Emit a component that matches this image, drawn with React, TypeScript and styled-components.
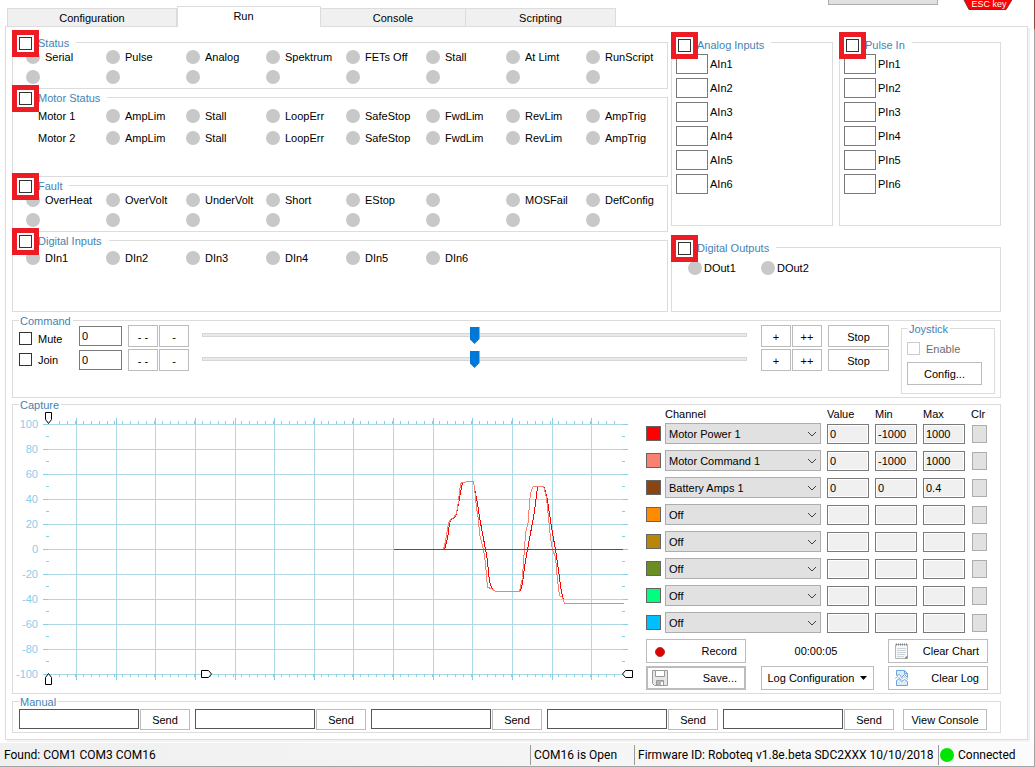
import React from 'react';
import styled, { createGlobalStyle, css } from 'styled-components';

const line = '#dcdcdc';
const buttonLine = '#bcbcbc';
const ink = '#000000';
const blue = '#4682b4';
const uiFont = "'Liberation Sans', Arial, sans-serif";

const GlobalStyle = createGlobalStyle`
  *, *::before, *::after { box-sizing: border-box; }
  body { margin: 0; background: #ffffff; color: ${ink}; font: 11px/14px ${uiFont}; }
  button, input, select { margin: 0; color: inherit; font: inherit; }
`;

/* ---------- window frame ---------- */

const Page = styled.div`
  min-height: 100vh;
  display: flex;
  flex-direction: column;
  border-style: solid;
  border-width: 0 1px 1px 0;
  border-image: linear-gradient(#8f4a3c 30px, #a4a4a4 30px) 1;
  overflow: hidden;
`;

const TopBar = styled.header`
  display: flex;
  height: 26px;
  padding-left: 7px;
  padding-right: 20px;
`;

const Tabs = styled.nav`
  flex: 0 1 609px;
  display: grid;
  grid-template-columns: 170fr 144fr 145fr 150fr;
  align-items: end;
`;

const Tab = styled.button<{ $active?: boolean }>`
  height: 18px;
  padding: 0;
  border: 1px solid ${line};
  border-bottom: 0;
  border-left-width: 0;
  background: #f0f0f0;
  &:first-child { border-left-width: 1px; }
  ${p =>
    p.$active &&
    css`
      height: 21px;
      margin-bottom: -1px;
      padding: 0 11px 3px 0;
      border-left-width: 1px;
      background: #ffffff;
      position: relative;
    `}
`;

const TopTools = styled.div`
  flex: 1;
  display: flex;
  justify-content: flex-end;
  align-items: flex-start;
  gap: 25px;
`;

const CutBox = styled.div`
  width: 110px;
  height: 5px;
  background: #e1e1e1;
  border: 1px solid #adadad;
  border-top: 0;
`;

const EscSign = styled.svg`
  display: block;
  width: 51px;
  height: 11px;
`;

const Panel = styled.main`
  margin: 0 6px 0 5px;
  padding: 15px 26px 6px 6px;
  border: 1px solid ${line};
  box-shadow: 2px 2px 0 #f3f3f3;
  display: flex;
  flex-direction: column;
`;

/* ---------- group boxes ---------- */

const Group = styled.fieldset`
  position: relative;
  min-width: 0;
  margin: 0;
  padding: 0;
  border: 1px solid ${line};
`;

const Caption = styled.legend<{ $marked?: boolean; $low?: boolean }>`
  position: absolute;
  z-index: 1;
  left: 6px;
  top: ${p => (p.$low ? -5 : -7)}px;
  height: 14px;
  padding: 0 2px 0 1px;
  background: #ffffff;
  color: ${blue};
  white-space: nowrap;
  ${p =>
    p.$marked &&
    css`
      left: 0;
      display: flex;
      align-items: center;
      padding: 0 7px 0 0;
    `}
`;

const Marker = styled.label`
  display: flex;
  align-items: center;
  justify-content: center;
  width: 27px;
  height: 27px;
  margin: 0 -1px 0 -1px;
  border: 5px solid #ed1c24;
  background: #ffffff;
  position: relative;
`;

const Check = styled.input.attrs({ type: 'checkbox' })`
  appearance: none;
  flex: none;
  width: 13px;
  height: 13px;
  border: 1px solid #333333;
  background: #ffffff;
  &:checked { background: #0078d7; }
  &:disabled { border-color: #cccccc; }
`;

type GroupBoxProps = { title: string; marked?: boolean; low?: boolean };

function GroupCaption({ title, marked, low }: GroupBoxProps) {
  return (
    <Caption $marked={marked} $low={low}>
      {marked && (
        <Marker>
          <Check aria-label={title} />
        </Marker>
      )}
      <span>{title}</span>
    </Caption>
  );
}

/* ---------- indicators ---------- */

const Upper = styled.div`
  display: grid;
  grid-template-columns: minmax(0, 656fr) minmax(0, 330fr);
  gap: 3px;
`;

const Stack = styled.div<{ $gap: number }>`
  display: flex;
  flex-direction: column;
  gap: ${p => p.$gap}px;
`;

const LedGroup = styled(Group)<{ $height: number; $top: number }>`
  min-height: ${p => p.$height}px;
  padding: ${p => p.$top}px 1px 0 13px;
`;

const LedRow = styled.div<{ $height: number }>`
  display: grid;
  grid-template-columns: repeat(8, minmax(0, 1fr));
  height: ${p => p.$height}px;
  align-items: center;
`;

const Led = styled.span<{ $gap?: number }>`
  display: flex;
  align-items: center;
  gap: ${p => p.$gap ?? 5}px;
  white-space: nowrap;
  &::before {
    content: '';
    flex: none;
    width: 14px;
    height: 14px;
    border-radius: 50%;
    background: #c8c8c8;
  }
`;

const RowName = styled.span`
  padding-left: 12px;
`;

const OutputRow = styled.div`
  display: grid;
  grid-template-columns: 73px 73px;
  height: 20px;
  align-items: center;
`;

const OutputGroup = styled(Group)`
  flex: 1;
  padding: 10px 0 0 16px;
`;

const InputPair = styled.div`
  display: grid;
  grid-template-columns: 1fr 1fr;
  gap: 6px;
`;

const PortGroup = styled(Group)`
  height: 184px;
  padding: 11px 4px 0;
`;

const Port = styled.label`
  display: flex;
  align-items: center;
  gap: 2px;
  margin-bottom: 4px;
`;

const Field = styled.input<{ $width?: number }>`
  width: ${p => (p.$width ? `${p.$width}px` : '100%')};
  min-width: 0;
  height: 20px;
  padding: 0 2px;
  border: 1px solid #7a7a7a;
  border-radius: 0;
  background: #ffffff;
`;

/* ---------- command ---------- */

const Button = styled.button<{ $width?: number; $height?: number }>`
  flex: none;
  width: ${p => (p.$width ? `${p.$width}px` : 'auto')};
  height: ${p => p.$height ?? 22}px;
  padding: 1px 0 0;
  border: 1px solid ${buttonLine};
  background: #ffffff;
  white-space: nowrap;
`;

const CommandGroup = styled(Group)`
  display: flex;
  height: 78px;
  margin-top: 8px;
  padding: 3px 5px 0 6px;
`;

const CheckColumn = styled.div`
  width: 60px;
  padding-top: 4px;
`;

const CheckLabel = styled.label<{ $disabled?: boolean }>`
  display: flex;
  align-items: center;
  gap: 6px;
  height: 21px;
  color: ${p => (p.$disabled ? '#6d6d6d' : ink)};
`;

const CommandRows = styled.div`
  flex: 1;
  min-width: 0;
`;

const CommandRow = styled.div`
  display: flex;
  align-items: center;
  height: 24px;
`;

const ButtonPair = styled.div<{ $before: number }>`
  display: flex;
  gap: 1px;
  margin: 0 6px 0 ${p => p.$before}px;
`;

const Slider = styled.input.attrs({ type: 'range' })`
  appearance: none;
  flex: 1;
  min-width: 0;
  height: 20px;
  margin: 0 7px 2px;
  background: transparent;
  &::-webkit-slider-runnable-track {
    height: 4px;
    border: 1px solid #d6d6d6;
    background: #e7eaea;
  }
  &::-webkit-slider-thumb {
    appearance: none;
    width: 10px;
    height: 17px;
    margin-top: -7px;
    background: #0078d7;
    clip-path: polygon(0 0, 100% 0, 100% 70%, 50% 100%, 0 70%);
  }
`;

const Joystick = styled(Group)`
  width: 94px;
  height: 66px;
  margin: 4px 0 0 12px;
  padding: 9px 5px 0;
`;

const JoystickButton = styled(Button)`
  margin-top: 3px;
`;

/* ---------- capture ---------- */

const CaptureGroup = styled(Group)`
  display: flex;
  margin-top: 6px;
  padding-right: 12px;
`;

const ChartArea = styled.div`
  flex: 1;
  min-width: 0;
  padding-right: 10px;
`;

const ChartSvg = styled.svg`
  display: block;
  width: 100%;
  font: 11px ${uiFont};
`;

const Channels = styled.div`
  flex: none;
  width: 342px;
  padding: 2px 0 3px;
`;

const ChannelTable = styled.table`
  width: 100%;
  table-layout: fixed;
  border-collapse: collapse;
  th {
    height: 14px;
    padding: 0;
    font-weight: normal;
    text-align: left;
  }
  td {
    height: 27px;
    padding: 0 6px 2px 0;
    vertical-align: middle;
  }
  td:last-child { padding: 0 0 2px 1px; }
  td > * { display: block; }
`;

const Swatch = styled.span<{ $color: string }>`
  width: 15px;
  height: 15px;
  border: 1px solid #646464;
  background: ${p => p.$color};
`;

const SelectWrap = styled.span`
  position: relative;
  svg {
    position: absolute;
    right: 4px;
    top: 8px;
    pointer-events: none;
  }
`;

const Select = styled.select`
  appearance: none;
  display: block;
  width: 100%;
  height: 21px;
  padding: 0 16px 0 3px;
  border: 1px solid #adadad;
  border-radius: 0;
  background: #e1e1e1;
`;

const Reading = styled(Field)`
  background: #f0f0f0;
  box-shadow: inset 0 0 0 1px #ffffff;
`;

const ClearBox = styled.button`
  width: 15px;
  height: 18px;
  padding: 0;
  border: 1px solid #adadad;
  background: #e1e1e1;
`;

const Actions = styled.div`
  display: grid;
  grid-template-columns: 100px 113px 100px;
  justify-content: space-between;
  align-items: center;
  gap: 3px 0;
  padding-top: 2px;
`;

const IconButton = styled.button<{ $focused?: boolean }>`
  display: flex;
  align-items: center;
  justify-content: space-between;
  height: 24px;
  padding: ${p => (p.$focused ? '0 7px 0 4px' : '0 8px 0 6px')};
  border: ${p => (p.$focused ? 2 : 1)}px solid ${buttonLine};
  background: #ffffff;
  svg { display: block; }
`;

const MenuButton = styled(IconButton)`
  padding-right: 6px;
`;

const Elapsed = styled.span`
  padding-right: 2px;
  text-align: center;
`;

/* ---------- manual ---------- */

const ManualGroup = styled(Group)`
  display: flex;
  gap: 5px;
  height: 32px;
  margin-top: 7px;
  padding: 7px 13px 0 6px;
`;

const ManualEntry = styled.div`
  flex: 1;
  min-width: 0;
  display: flex;
  gap: 1px;
`;

const ManualField = styled(Field)`
  border-color: #555555;
`;

const ConsoleButton = styled(Button)`
  margin-left: 4px;
`;

/* ---------- status bar ---------- */

const StatusBar = styled.footer`
  display: flex;
  align-items: center;
  height: 23px;
  margin-top: 3px;
  background: linear-gradient(90deg, #f0f0f0, #f4f4f4 50%, #fbfbfb);
  font: 12px/20px Roboto, 'Segoe UI', sans-serif;
  white-space: nowrap;
`;

const StatusCell = styled.span<{ $width?: number }>`
  flex: ${p => (p.$width ? `0 0 ${p.$width}px` : '1')};
  display: flex;
  align-items: center;
  height: 20px;
  padding-left: 3px;
  border-left: 1px solid ${p => (p.$width ? '#9a9a9a' : 'transparent')};
`;

const Online = styled.span`
  width: 14px;
  height: 14px;
  margin: 0 4px 0 -2px;
  border-radius: 50%;
  background: #00e600;
`;

/* ---------- data ---------- */

const statusLeds = ['Serial', 'Pulse', 'Analog', 'Spektrum', 'FETs Off', 'Stall', 'At Limt', 'RunScript'];
const motorLeds = ['AmpLim', 'Stall', 'LoopErr', 'SafeStop', 'FwdLim', 'RevLim', 'AmpTrig'];
const faultLeds = ['OverHeat', 'OverVolt', 'UnderVolt', 'Short', 'EStop', '', 'MOSFail', 'DefConfig'];
const inputLeds = ['DIn1', 'DIn2', 'DIn3', 'DIn4', 'DIn5', 'DIn6'];
const blanks = Array<string>(8).fill('');
const ports = [1, 2, 3, 4, 5, 6];

const channels = [
  { color: '#ff0000', name: 'Motor Power 1', value: '0', min: '-1000', max: '1000' },
  { color: '#fa8072', name: 'Motor Command 1', value: '0', min: '-1000', max: '1000' },
  { color: '#8b4513', name: 'Battery Amps 1', value: '0', min: '0', max: '0.4' },
  { color: '#ff8c00', name: 'Off', value: '', min: '', max: '' },
  { color: '#b8860b', name: 'Off', value: '', min: '', max: '' },
  { color: '#6b8e23', name: 'Off', value: '', min: '', max: '' },
  { color: '#00ff7f', name: 'Off', value: '', min: '', max: '' },
  { color: '#00bfff', name: 'Off', value: '', min: '', max: '' },
];

const commandTrace =
  '443,549 445,541 446,535 448,523 450,519 453,517 456,513 458,500 460,483 462,482 465,482 466,481 473,481 474,487 476,507 478,520 479,533 483,549 485,563 487,587 491,588 495,591 519,591 522,577 523,560 524,549 525,533 528,520 529,500 531,489 533,486 543,486 546,497 548,517 550,537 552,549 555,557 557,580 559,595 562,597 564,603 623,603';
const powerTraces = [
  '444,549 447,538 449,523 450,519 454,517 456,513 458,503 460,492 462,482',
  '473,481 475,493 477,503 479,517 482,533 485,549 487,560 488,573 490,585 492,588 495,591',
  '520,591 522,582 524,567 527,549 529,538 533,517 535,503 537,487',
  '544,487 547,500 550,520 552,533 555,549 558,570 561,592 564,603',
];

/* ---------- parts ---------- */

function Leds({ names, height = 20 }: { names: string[]; height?: number }) {
  return (
    <LedRow $height={height}>
      {names.map((name, i) => (
        <Led key={i}>{name}</Led>
      ))}
    </LedRow>
  );
}

function PortList({ title, prefix }: { title: string; prefix: string }) {
  return (
    <PortGroup>
      <GroupCaption title={title} marked low />
      {ports.map(n => (
        <Port key={n}>
          <Field $width={32} readOnly />
          {prefix + n}
        </Port>
      ))}
    </PortGroup>
  );
}

function Command({ motor }: { motor: number }) {
  return (
    <CommandRow>
      <Field $width={43} defaultValue="0" aria-label={`Motor ${motor} command`} />
      <ButtonPair $before={6}>
        <Button $width={30}>- -</Button>
        <Button $width={30}>-</Button>
      </ButtonPair>
      <Slider min={-1000} max={1000} defaultValue={0} aria-label={`Motor ${motor} level`} />
      <ButtonPair $before={7}>
        <Button $width={30}>+</Button>
        <Button $width={30}>++</Button>
      </ButtonPair>
      <Button $width={61}>Stop</Button>
    </CommandRow>
  );
}

function Chart() {
  const rows = Array.from({ length: 11 }, (_, i) => i);
  const columns = Array.from({ length: 14 }, (_, i) => Math.round(76 + i * 39.63));
  const ticks = Array.from({ length: 71 }, (_, i) => Math.round(60 + i * 7.926));
  return (
    <ChartSvg viewBox="13 405 623 288" role="img" aria-label="Captured channels">
      <g shapeRendering="crispEdges" fill="none">
        {rows.map(i => {
          const y = 424.5 + i * 25;
          return (
            <g key={i}>
              <path d={`M43 ${y}H628`} stroke="#add8e6" />
              <path d={`M43 ${y}h5M623 ${y}h5`} stroke="#87ceeb" />
              {i < 10 && <path d={`M46 ${y + 12}h3M622 ${y + 12}h3`} stroke="#87ceeb" />}
            </g>
          );
        })}
        {columns.map(x => (
          <g key={x}>
            <path d={`M${x + 0.5} 424V674`} stroke="#add8e6" />
            <path d={`M${x + 0.5} 418v6M${x + 0.5} 674v6`} stroke="#87ceeb" />
          </g>
        ))}
        {ticks.map(x => (
          <path key={x} d={`M${x - 0.5} 421v3M${x - 0.5} 674v3`} stroke="#87ceeb" />
        ))}
        <g transform="translate(0.5 0.5)">
          {powerTraces.map(points => (
            <polyline key={points} points={points} stroke="#ff0000" />
          ))}
          <polyline points={commandTrace} stroke="#fa8072" />
        </g>
        <path d="M394 549.5H623" stroke="#8b4513" />
      </g>
      <g fill="#ffffff" stroke="#000000">
        <path d="M45.500 412.500h6v7l-3 4l-3-4z" />
        <path d="M45.500 684.500h6v-7l-3-4l-3 4z" />
        <path d="M201.500 670.500h7l3 3.500l-3 3.500h-7z" />
        <path d="M632.500 670.500h-7l-3 3.500l3 3.500h7z" />
      </g>
      <g fill="#87ceeb" textAnchor="end">
        {rows.map(i => (
          <text key={i} x={38} y={428 + i * 25}>
            {100 - i * 20}
          </text>
        ))}
      </g>
    </ChartSvg>
  );
}

function ChannelList() {
  return (
    <ChannelTable>
      <colgroup>
        <col style={{ width: 19 }} />
        <col />
        <col style={{ width: 48 }} />
        <col style={{ width: 48 }} />
        <col style={{ width: 48 }} />
        <col style={{ width: 17 }} />
      </colgroup>
      <thead>
        <tr>
          <th />
          <th>Channel</th>
          <th>Value</th>
          <th>Min</th>
          <th>Max</th>
          <th>Clr</th>
        </tr>
      </thead>
      <tbody>
        {channels.map((c, i) => (
          <tr key={c.color}>
            <td>
              <Swatch $color={c.color} />
            </td>
            <td>
              <SelectWrap>
                <Select aria-label={`Channel ${i + 1}`} defaultValue={c.name}>
                  <option>{c.name}</option>
                </Select>
                <svg width="10" height="6" viewBox="0 0 10 6" fill="none" stroke="#404040">
                  <path d="M1 1l4 4l4-4" />
                </svg>
              </SelectWrap>
            </td>
            <td>
              <Reading readOnly value={c.value} aria-label={`Value ${i + 1}`} />
            </td>
            <td>
              <Reading readOnly value={c.min} aria-label={`Min ${i + 1}`} />
            </td>
            <td>
              <Reading readOnly value={c.max} aria-label={`Max ${i + 1}`} />
            </td>
            <td>
              <ClearBox aria-label={`Clear ${i + 1}`} />
            </td>
          </tr>
        ))}
      </tbody>
    </ChannelTable>
  );
}

const RecordIcon = () => (
  <svg width="14" height="14" viewBox="0 0 14 14">
    <circle cx="7" cy="8" r="4.500" fill="#e00000" stroke="#b03030" />
  </svg>
);

const SaveIcon = () => (
  <svg width="16" height="16" viewBox="0 0 16 16" fill="none" stroke="#9a9a9a">
    <path d="M.5 .5h15v15h-13l-2-2z" fill="#e6e6e6" />
    <path d="M3.500 .5h9v6h-9z" fill="#ffffff" />
    <path d="M4.500 15.500v-5h7v5z" fill="#b4b4b4" />
    <path d="M9 12h2v3h-2z" fill="#ffffff" stroke="none" />
  </svg>
);

const NotepadIcon = () => (
  <svg width="14" height="16" viewBox="0 0 14 16" fill="none">
    <path d="M.5 1.500h12v11l-3 3h-9z" fill="#f6f8fa" stroke="#b4b4b4" />
    <path d="M12.500 12.500v3h-3z" fill="#808080" stroke="#a0a0a0" />
    <path d="M1 1.500h12" stroke="#808080" strokeWidth="2" strokeDasharray="1 1" />
    <path d="M2 5.500h9M2 7.500h9M2 9.500h9M2 11.500h8M2 13.500h7" stroke="#ccd4dc" />
  </svg>
);

const LogIcon = () => (
  <svg width="14" height="16" viewBox="0 0 14 16" fill="none" stroke="#6aa5e0">
    <path d="M1.500 5.500v-5h8l3 3v4l-3-3l-3 3l-2-3z" fill="#dcecfb" />
    <path d="M9.500 .5v3h3" />
    <path d="M1.500 10.500l3-2l2 3l3-2l3 2v4h-11z" fill="#dcecfb" />
    <path d="M0 8.500l3-2l3 3l3-3l4 3" stroke="#a8b4c0" />
  </svg>
);

export default function App() {
  return (
    <Page>
      <GlobalStyle />
      <TopBar>
        <Tabs>
          <Tab>Configuration</Tab>
          <Tab $active>Run</Tab>
          <Tab>Console</Tab>
          <Tab>Scripting</Tab>
        </Tabs>
        <TopTools>
          <CutBox />
          <EscSign viewBox="0 0 51 11">
            <path d="M0 -2L6 9.500H43L50 -2z" fill="#ff0000" stroke="#7a3030" />
            <text x="26" y="7" fill="#ffffff" textAnchor="middle" fontSize="9">
              ESC key
            </text>
          </EscSign>
        </TopTools>
      </TopBar>

      <Panel>
        <Upper>
          <Stack $gap={8}>
            <LedGroup $height={47} $top={4}>
              <GroupCaption title="Status" marked />
              <Leds names={statusLeds} />
              <Leds names={blanks} />
            </LedGroup>
            <LedGroup $height={80} $top={7}>
              <GroupCaption title="Motor Status" marked />
              {[1, 2].map(n => (
                <LedRow key={n} $height={22}>
                  <RowName>Motor {n}</RowName>
                  {motorLeds.map(name => (
                    <Led key={name}>{name}</Led>
                  ))}
                </LedRow>
              ))}
            </LedGroup>
            <LedGroup $height={47} $top={4}>
              <GroupCaption title="Fault" marked />
              <Leds names={faultLeds} />
              <Leds names={blanks} />
            </LedGroup>
            <LedGroup $height={72} $top={7}>
              <GroupCaption title="Digital Inputs" marked />
              <Leds names={inputLeds} />
            </LedGroup>
          </Stack>
          <Stack $gap={21}>
            <InputPair>
              <PortList title="Analog Inputs" prefix="AIn" />
              <PortList title="Pulse In" prefix="PIn" />
            </InputPair>
            <OutputGroup>
              <GroupCaption title="Digital Outputs" marked />
              <OutputRow>
                <Led $gap={2}>DOut1</Led>
                <Led $gap={2}>DOut2</Led>
              </OutputRow>
            </OutputGroup>
          </Stack>
        </Upper>

        <CommandGroup>
          <GroupCaption title="Command" />
          <CheckColumn>
            <CheckLabel>
              <Check />
              Mute
            </CheckLabel>
            <CheckLabel>
              <Check />
              Join
            </CheckLabel>
          </CheckColumn>
          <CommandRows>
            <Command motor={1} />
            <Command motor={2} />
          </CommandRows>
          <Joystick>
            <GroupCaption title="Joystick" />
            <CheckLabel $disabled>
              <Check disabled />
              Enable
            </CheckLabel>
            <JoystickButton $width={75} $height={23}>
              Config...
            </JoystickButton>
          </Joystick>
        </CommandGroup>

        <CaptureGroup>
          <GroupCaption title="Capture" />
          <ChartArea>
            <Chart />
          </ChartArea>
          <Channels>
            <ChannelList />
            <Actions>
              <IconButton>
                <RecordIcon />
                Record
              </IconButton>
              <Elapsed>00:00:05</Elapsed>
              <IconButton>
                <NotepadIcon />
                Clear Chart
              </IconButton>
              <IconButton $focused>
                <SaveIcon />
                Save...
              </IconButton>
              <MenuButton>
                Log Configuration
                <svg width="7" height="4" viewBox="0 0 7 4">
                  <path d="M0 0h7l-3.500 4z" />
                </svg>
              </MenuButton>
              <IconButton>
                <LogIcon />
                Clear Log
              </IconButton>
            </Actions>
          </Channels>
        </CaptureGroup>

        <ManualGroup>
          <GroupCaption title="Manual" />
          {[1, 2, 3, 4, 5].map(n => (
            <ManualEntry key={n}>
              <ManualField aria-label={`Manual command ${n}`} />
              <Button $width={50} $height={21}>
                Send
              </Button>
            </ManualEntry>
          ))}
          <ConsoleButton $width={84} $height={21}>
            View Console
          </ConsoleButton>
        </ManualGroup>
      </Panel>

      <StatusBar>
        <StatusCell>Found: COM1 COM3 COM16</StatusCell>
        <StatusCell $width={104}>COM16 is Open</StatusCell>
        <StatusCell $width={304}>Firmware ID: Roboteq v1.8e.beta SDC2XXX 10/10/2018</StatusCell>
        <StatusCell $width={96}>
          <Online />
          Connected
        </StatusCell>
      </StatusBar>
    </Page>
  );
}
